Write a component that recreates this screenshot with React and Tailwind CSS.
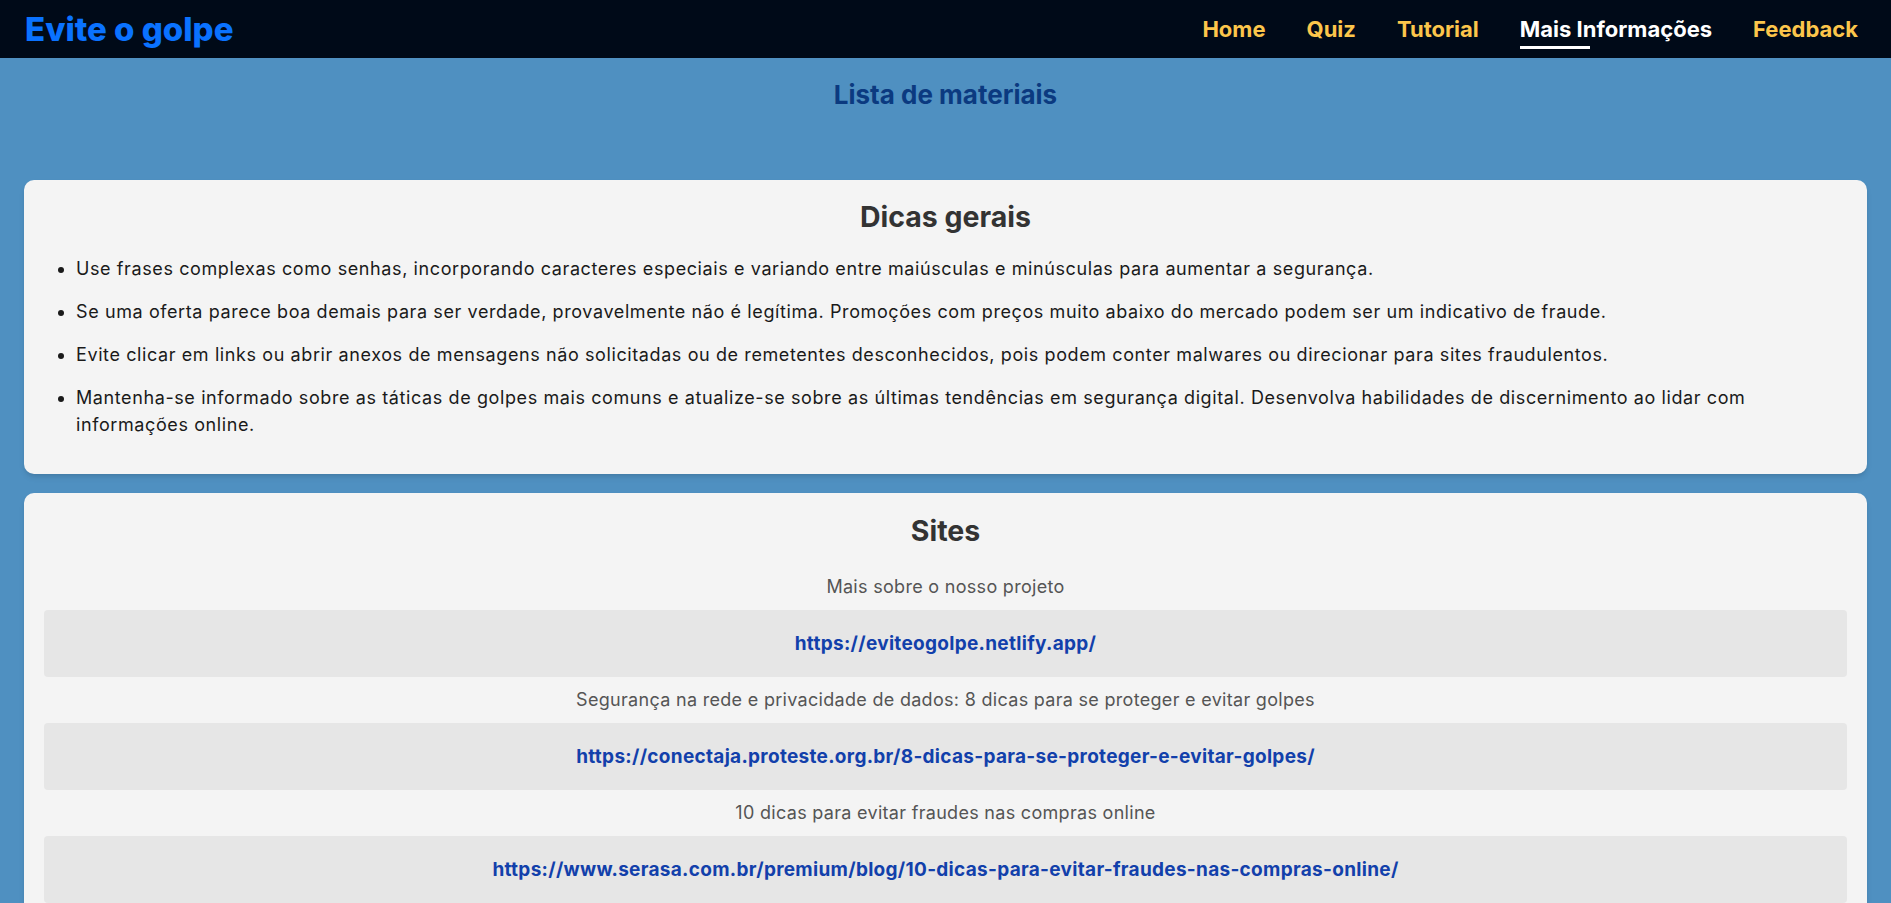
const navLinks = [
  { label: 'Home' },
  { label: 'Quiz' },
  { label: 'Tutorial' },
  { label: 'Mais Informações', active: true },
  { label: 'Feedback' },
];

const dicas = [
  'Use frases complexas como senhas, incorporando caracteres especiais e variando entre maiúsculas e minúsculas para aumentar a segurança.',
  'Se uma oferta parece boa demais para ser verdade, provavelmente não é legítima. Promoções com preços muito abaixo do mercado podem ser um indicativo de fraude.',
  'Evite clicar em links ou abrir anexos de mensagens não solicitadas ou de remetentes desconhecidos, pois podem conter malwares ou direcionar para sites fraudulentos.',
  'Mantenha-se informado sobre as táticas de golpes mais comuns e atualize-se sobre as últimas tendências em segurança digital. Desenvolva habilidades de discernimento ao lidar com informações online.',
];

const sites = [
  { desc: 'Mais sobre o nosso projeto', url: 'https://eviteogolpe.netlify.app/' },
  { desc: 'Segurança na rede e privacidade de dados: 8 dicas para se proteger e evitar golpes', url: 'https://conectaja.proteste.org.br/8-dicas-para-se-proteger-e-evitar-golpes/' },
  { desc: '10 dicas para evitar fraudes nas compras online', url: 'https://www.serasa.com.br/premium/blog/10-dicas-para-evitar-fraudes-nas-compras-online/' },
];

export default function App() {
  return (
    <div className="min-h-screen bg-[#4f90c1] font-['Inter','Noto_Sans',sans-serif]">
      <header className="h-[58px] bg-[#000a18] flex items-center justify-between pl-[25px] pr-[33px]">
        <h1 className="text-[33px] font-extrabold text-[#0a72ff] leading-none">Evite o golpe</h1>
        <nav className="flex items-center gap-[41px]">
          {navLinks.map(l => (
            <a key={l.label} href="#" className={`relative text-[22px] font-bold leading-none ${l.active ? 'text-white' : 'text-[#fcc64b]'}`}>
              {l.label}
              {l.active && <span className="absolute left-0 top-[28px] w-[70px] h-[3px] bg-white" />}
            </a>
          ))}
        </nav>
      </header>

      <h2 className="pt-[19px] pb-[67px] text-center text-[26px] font-bold leading-[36px] text-[#0b3a80]">Lista de materiais</h2>

      <main className="px-[24px] pb-6 flex flex-col gap-[19px]">
        <section className="bg-[#f4f4f4] rounded-[10px] shadow-md p-[20px]">
          <h3 className="text-center text-[28.5px] font-bold leading-[34px] text-[#333333] mb-[21px]">Dicas gerais</h3>
          <ul className="list-disc pl-[32px] text-[18px] tracking-[0.6px] leading-[27px] text-[#1a1a1a]">
            {dicas.map(d => (
              <li key={d} className="mb-4">{d}</li>
            ))}
          </ul>
        </section>

        <section className="bg-[#f4f4f4] rounded-[10px] shadow-md p-[20px]">
          <h3 className="text-center text-[28.5px] font-bold leading-[36px] text-[#333333] mb-[24px]">Sites</h3>
          <div className="flex flex-col">
            {sites.map(s => (
              <div key={s.url} className="flex flex-col">
                <p className="text-center text-[18px] tracking-[0.3px] leading-[27px] text-[#555555] mb-[10px]">{s.desc}</p>
                <div className="bg-[#e6e6e6] rounded-[4px] py-[20px] text-center mb-[9px]">
                  <a href="#" className="text-[19px] tracking-[0.3px] font-bold leading-[27px] text-[#1240ab]">{s.url}</a>
                </div>
              </div>
            ))}
          </div>
        </section>
      </main>
    </div>
  );
}
